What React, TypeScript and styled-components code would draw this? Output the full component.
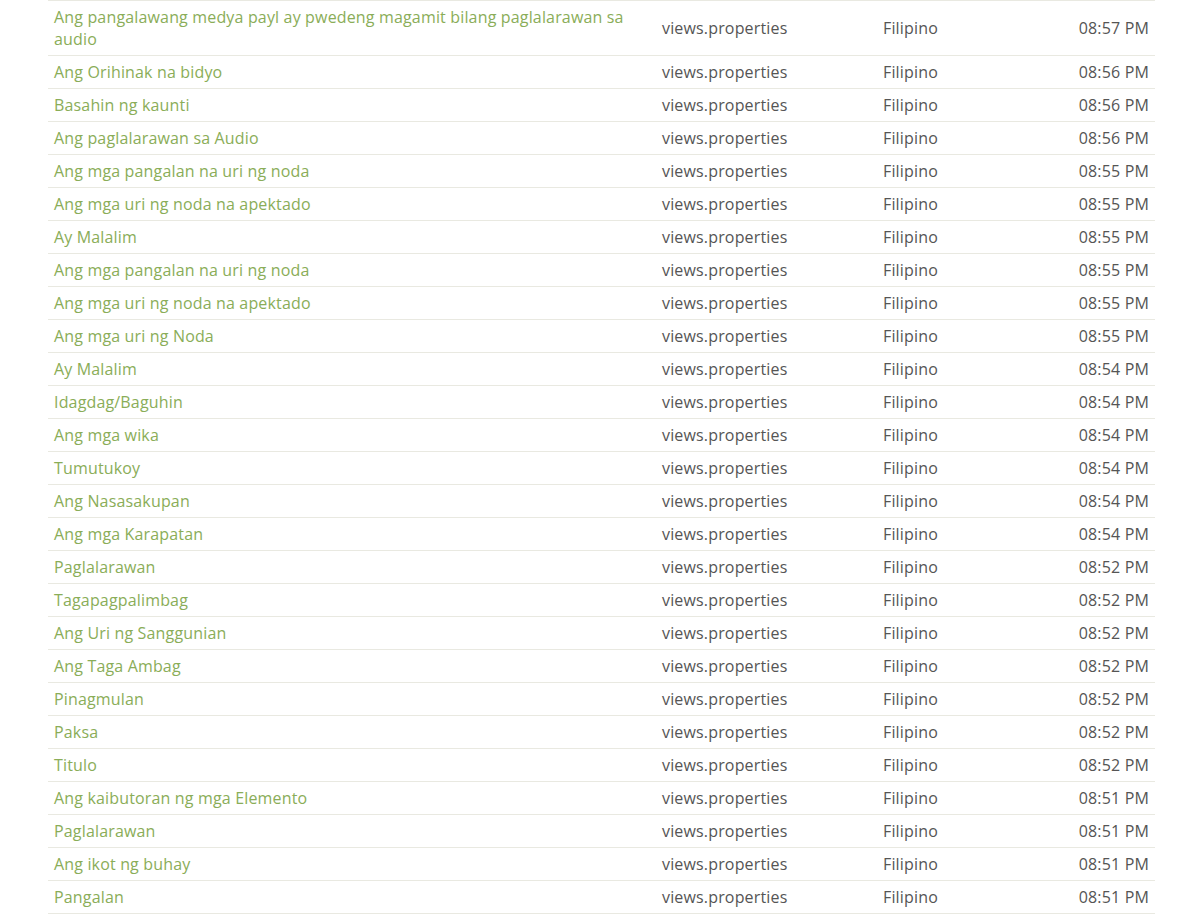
import React from "react";
import styled, { createGlobalStyle } from "styled-components";

const Global = createGlobalStyle`
  html, body { margin: 0; padding: 0; background: #fff; }
  body { font-family: "Open Sans", "Noto Sans", sans-serif; }
`;

const Wrap = styled.div`
  padding: 0 40px 0 48px;
`;

const Table = styled.table`
  width: 1107px;
  border-collapse: collapse;
  font-size: 16px;
  line-height: 22px;
  letter-spacing: 0.16px;
  color: #555;
`;

const Row = styled.tr`
  border-top: 1px solid #e9e9e1;
  border-bottom: 1px solid #e9e9e1;
`;

const Cell = styled.td<{ $w?: number; $right?: boolean }>`
  padding: 5px 6px;
  vertical-align: middle;
  width: ${(p) => (p.$w ? `${p.$w}px` : "auto")};
  text-align: ${(p) => (p.$right ? "right" : "left")};
`;

const Link = styled.a`
  color: #8aad58;
  text-decoration: none;
`;

const rows: [string, string][] = [
  ["Ang pangalawang medya payl ay pwedeng magamit bilang paglalarawan sa audio", "08:57 PM"],
  ["Ang Orihinak na bidyo", "08:56 PM"],
  ["Basahin ng kaunti", "08:56 PM"],
  ["Ang paglalarawan sa Audio", "08:56 PM"],
  ["Ang mga pangalan na uri ng noda", "08:55 PM"],
  ["Ang mga uri ng noda na apektado", "08:55 PM"],
  ["Ay Malalim", "08:55 PM"],
  ["Ang mga pangalan na uri ng noda", "08:55 PM"],
  ["Ang mga uri ng noda na apektado", "08:55 PM"],
  ["Ang mga uri ng Noda", "08:55 PM"],
  ["Ay Malalim", "08:54 PM"],
  ["Idagdag/Baguhin", "08:54 PM"],
  ["Ang mga wika", "08:54 PM"],
  ["Tumutukoy", "08:54 PM"],
  ["Ang Nasasakupan", "08:54 PM"],
  ["Ang mga Karapatan", "08:54 PM"],
  ["Paglalarawan", "08:52 PM"],
  ["Tagapagpalimbag", "08:52 PM"],
  ["Ang Uri ng Sanggunian", "08:52 PM"],
  ["Ang Taga Ambag", "08:52 PM"],
  ["Pinagmulan", "08:52 PM"],
  ["Paksa", "08:52 PM"],
  ["Titulo", "08:52 PM"],
  ["Ang kaibutoran ng mga Elemento", "08:51 PM"],
  ["Paglalarawan", "08:51 PM"],
  ["Ang ikot ng buhay", "08:51 PM"],
  ["Pangalan", "08:51 PM"],
];

export default function App() {
  return (
    <>
      <Global />
      <Wrap>
        <Table>
          <tbody>
            {rows.map(([label, time], i) => (
              <Row key={i}>
                <Cell $w={596}>
                  <Link href="#">{label}</Link>
                </Cell>
                <Cell $w={209}>views.properties</Cell>
                <Cell $w={150}>Filipino</Cell>
                <Cell $right>{time}</Cell>
              </Row>
            ))}
          </tbody>
        </Table>
      </Wrap>
    </>
  );
}
